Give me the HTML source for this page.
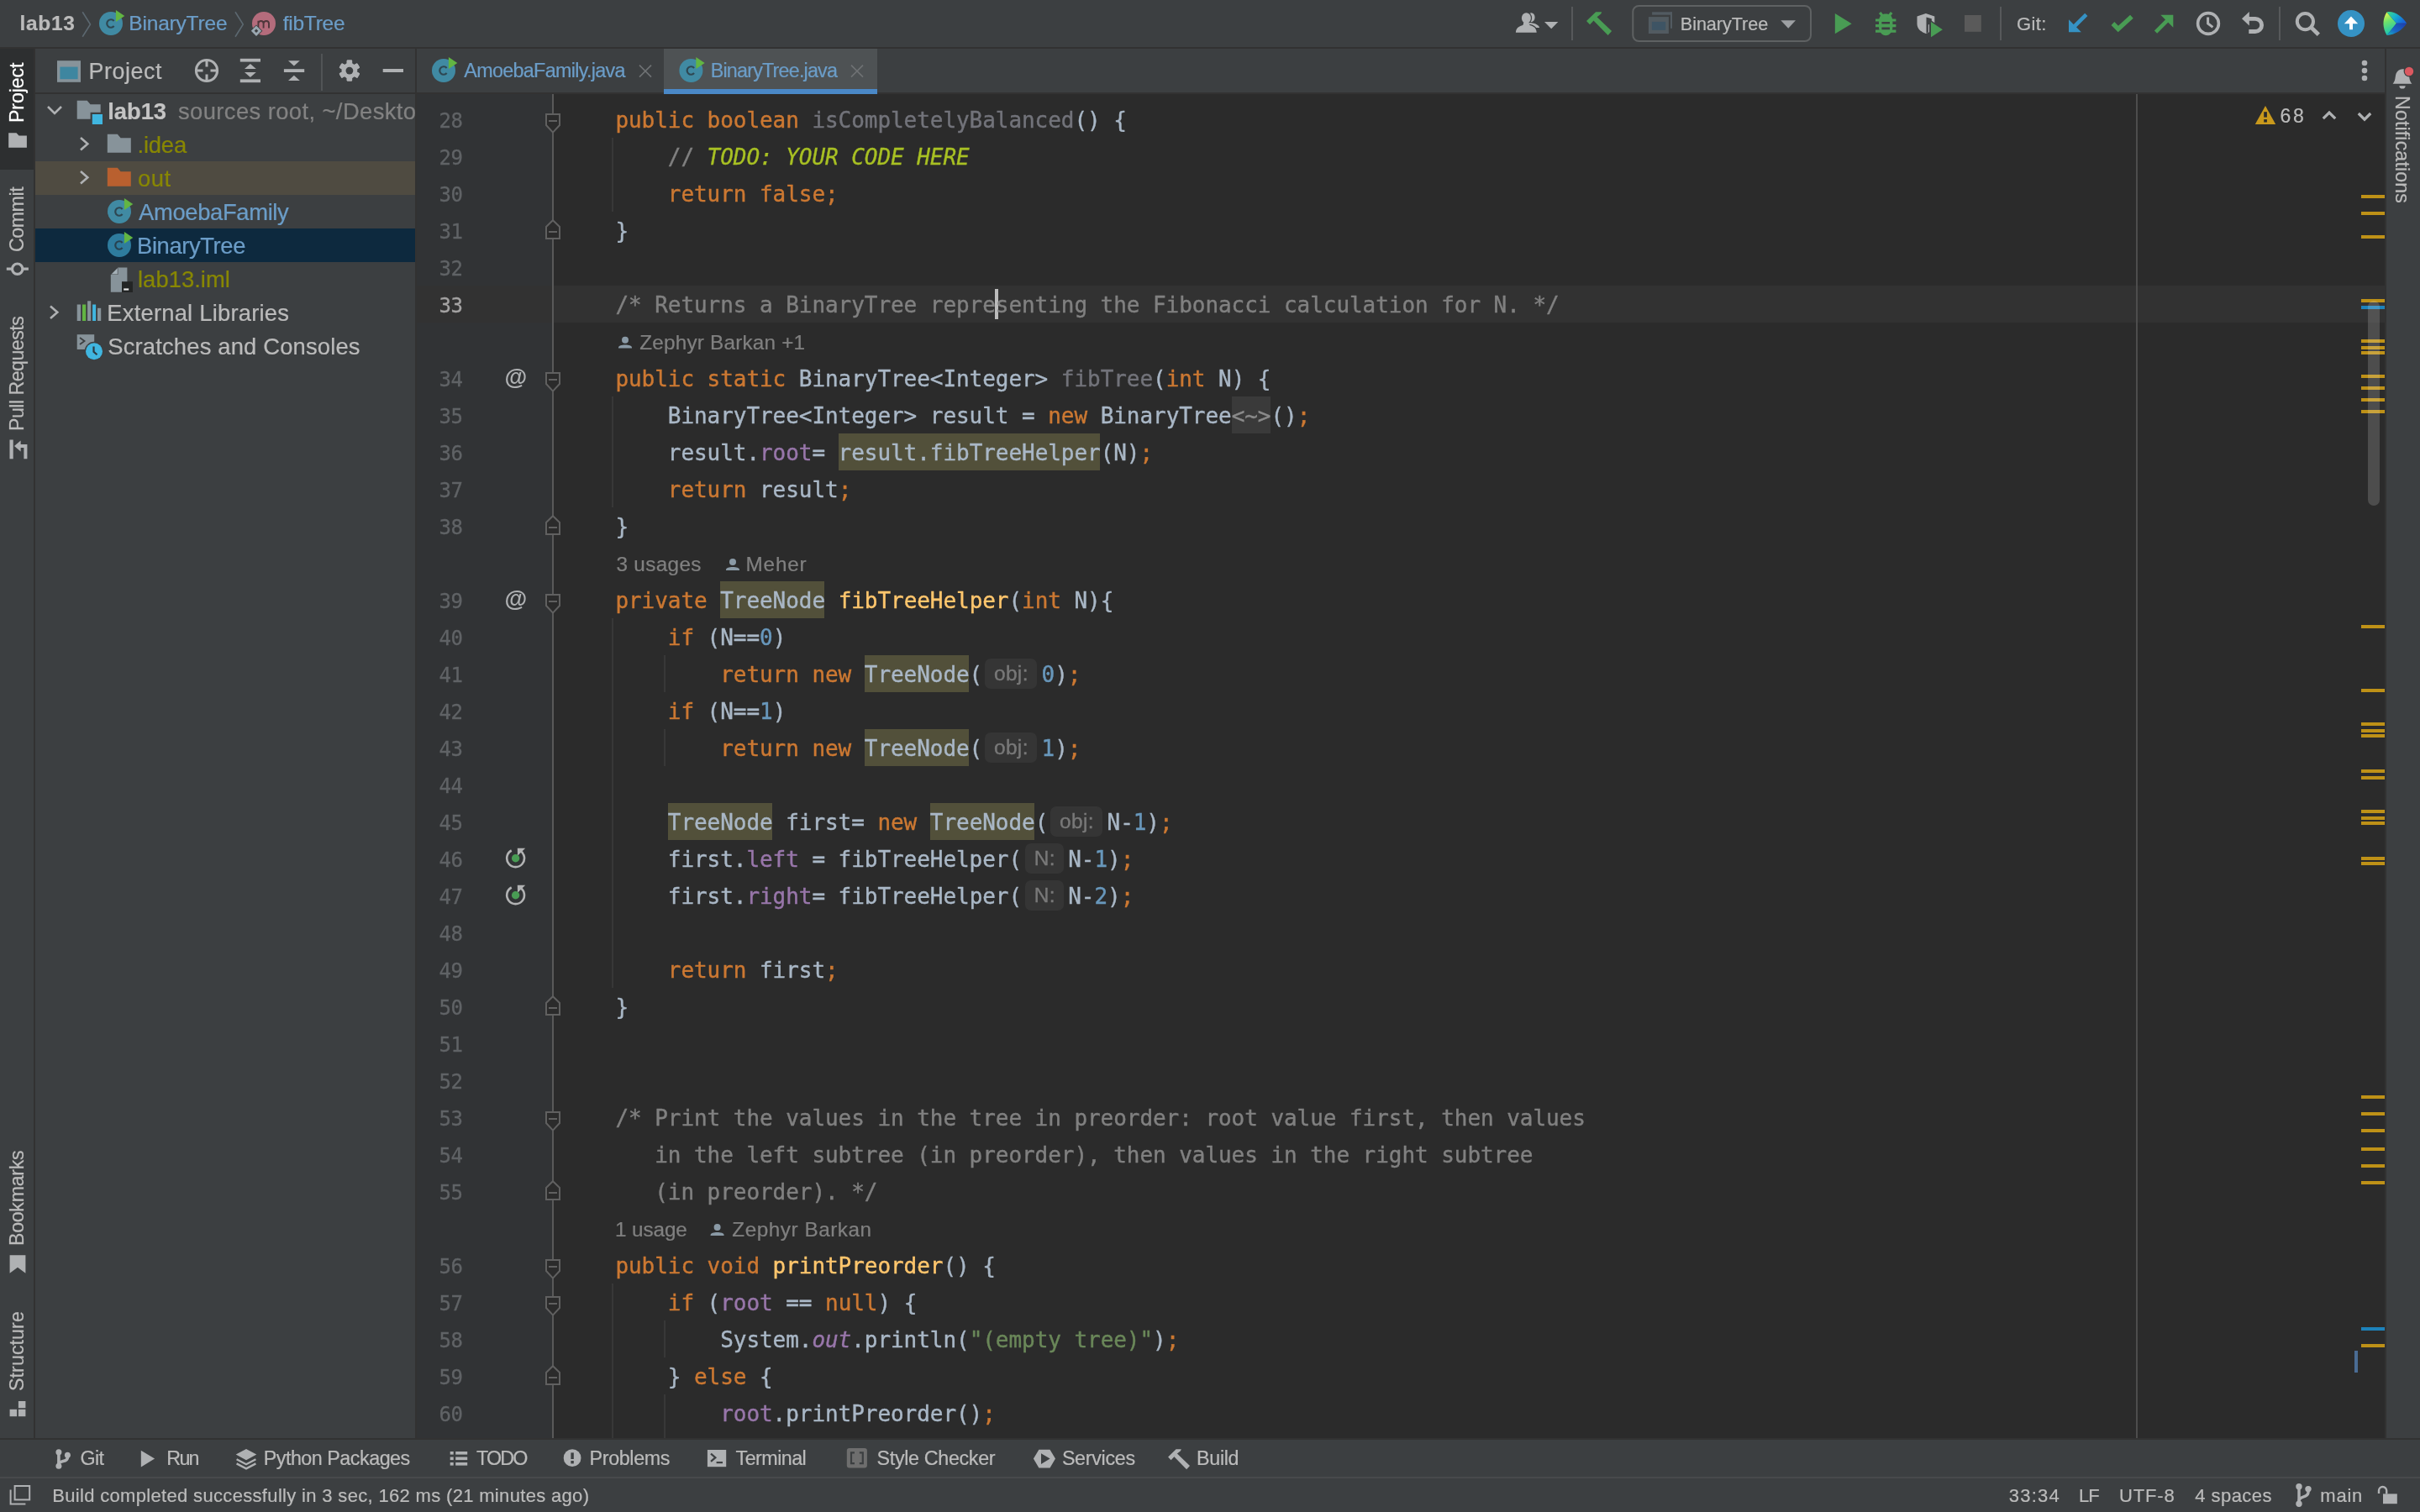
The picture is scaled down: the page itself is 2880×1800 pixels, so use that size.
<!DOCTYPE html><html><head><meta charset="utf-8"><title>lab13 - BinaryTree.java</title><style>
html,body{margin:0;padding:0}
body{width:2880px;height:1800px;background:#3c3f41;position:relative;overflow:hidden;font-family:"Liberation Sans", sans-serif;color:#bbb}
.r{position:absolute}
.t{position:absolute;white-space:nowrap;line-height:1em;display:block;-webkit-text-stroke:0.22px}
#ov{position:absolute;left:0;top:0}
#w{position:absolute;left:0;top:0;width:2880px;height:1800px;overflow:hidden;will-change:transform}
.cl{position:absolute;left:670px;height:44px;line-height:44px;white-space:pre;font-family:"DejaVu Sans Mono", "Liberation Mono", monospace;font-size:26px;letter-spacing:-0.053px;color:#a9b7c6;-webkit-text-stroke:0.4px}
.ln{position:absolute;left:496px;width:54.5px;text-align:right;height:44px;line-height:44px;font-family:"DejaVu Sans Mono", "Liberation Mono", monospace;font-size:24px;letter-spacing:-0.4px;color:#606366;-webkit-text-stroke:0.3px}
.k{color:#cc7832}.d{color:#a9b7c6}.c{color:#808080}.t2{}.n{color:#6897bb}.s{color:#6a8759}.f{color:#9876aa}
.fs{color:#9876aa;font-style:italic}.m{color:#ffc66d}.u{color:#72737a}.fo{color:#8a8a8a}
.cl .t{position:static;display:inline;color:#a8c023;font-style:italic;line-height:inherit;-webkit-text-stroke:0.3px}
.ih{display:inline-block;height:36px;vertical-align:top;position:relative;top:3px;letter-spacing:0}
.ihb{display:block;height:36px;line-height:35px;border-radius:7px;background:#353535;color:#787878;font-family:"Liberation Sans", sans-serif;font-size:24.4px;letter-spacing:0.35px;text-align:center}
.at{position:absolute;font-family:"Liberation Sans", sans-serif;font-weight:bold;font-size:27.4px;line-height:1em;color:#afb1b3}

</style></head><body><div id="w">
<div class="r" style="left:0px;top:56px;width:2880px;height:2px;background:#323232;"></div>
<div class="r" style="left:0px;top:58px;width:40px;height:1654px;background:#3c3f41;"></div>
<div class="r" style="left:0px;top:58px;width:40px;height:144px;background:#2d2f30;"></div>
<div class="r" style="left:40px;top:58px;width:2px;height:1654px;background:#323232;"></div>
<div class="r" style="left:42px;top:110px;width:452px;height:2px;background:#323232;"></div>
<div class="r" style="left:494px;top:58px;width:2px;height:1654px;background:#323232;"></div>
<div class="r" style="left:42px;top:192px;width:452px;height:40px;background:#4f4b41;"></div>
<div class="r" style="left:42px;top:272px;width:452px;height:40px;background:#0d293e;"></div>
<div class="r" style="left:496px;top:110px;width:2344px;height:2px;background:#323232;"></div>
<div class="r" style="left:790px;top:58px;width:254.3px;height:48px;background:#4e5254;"></div>
<div class="r" style="left:790px;top:106px;width:254.3px;height:6px;background:#4a88c7;"></div>
<div class="r" style="left:496px;top:112px;width:2344px;height:1600px;background:#2b2b2b;"></div>
<div class="r" style="left:496px;top:112px;width:161px;height:1600px;background:#313335;"></div>
<div class="r" style="left:496px;top:340px;width:2344px;height:44px;background:#323232;"></div>
<div class="r" style="left:657px;top:112px;width:2px;height:1600px;background:#595959;"></div>
<div class="r" style="left:2542px;top:112px;width:2px;height:1600px;background:#4d4d4d;"></div>
<div class="r" style="left:2838px;top:58px;width:2px;height:1654px;background:#323232;"></div>
<div class="r" style="left:2840px;top:58px;width:40px;height:1654px;background:#3c3f41;"></div>
<div class="r" style="left:0px;top:1712px;width:2880px;height:2px;background:#323232;"></div>
<div class="r" style="left:0px;top:1758px;width:2880px;height:2px;background:#484a4c;"></div>
<div class="r" style="left:728px;top:164px;width:2px;height:88px;background:#383838;"></div>
<div class="r" style="left:728px;top:472px;width:2px;height:132px;background:#383838;"></div>
<div class="r" style="left:728px;top:736px;width:2px;height:440px;background:#383838;"></div>
<div class="r" style="left:728px;top:1528px;width:2px;height:184px;background:#383838;"></div>
<div class="r" style="left:790.4px;top:780px;width:2px;height:44px;background:#383838;"></div>
<div class="r" style="left:790.4px;top:868px;width:2px;height:44px;background:#383838;"></div>
<div class="r" style="left:790.4px;top:1572px;width:2px;height:44px;background:#383838;"></div>
<div class="r" style="left:790.4px;top:1660px;width:2px;height:52px;background:#383838;"></div>
<div class="r" style="left:997.6px;top:516px;width:311.2px;height:44px;background:#52503a;"></div>
<div class="r" style="left:857.2px;top:692px;width:124.0px;height:44px;background:#52503a;"></div>
<div class="r" style="left:1028.8px;top:780px;width:124.0px;height:44px;background:#52503a;"></div>
<div class="r" style="left:1028.8px;top:868px;width:124.0px;height:44px;background:#52503a;"></div>
<div class="r" style="left:794.8px;top:956px;width:124.0px;height:44px;background:#52503a;"></div>
<div class="r" style="left:1106.8px;top:956px;width:124.0px;height:44px;background:#52503a;"></div>
<div class="r" style="left:1465.6px;top:472px;width:46.0px;height:44px;background:#3a3a3a;"></div>
<div class="r" style="left:1184px;top:344px;width:4px;height:36px;background:#bbbbbb;"></div>
<div class="r" style="left:2810px;top:232px;width:28px;height:4px;background:#be9117;"></div>
<div class="r" style="left:2810px;top:252px;width:28px;height:4px;background:#be9117;"></div>
<div class="r" style="left:2810px;top:280px;width:28px;height:4px;background:#be9117;"></div>
<div class="r" style="left:2810px;top:356px;width:28px;height:4px;background:#be9117;"></div>
<div class="r" style="left:2810px;top:404px;width:28px;height:4px;background:#be9117;"></div>
<div class="r" style="left:2810px;top:412px;width:28px;height:4px;background:#be9117;"></div>
<div class="r" style="left:2810px;top:418px;width:28px;height:4px;background:#be9117;"></div>
<div class="r" style="left:2810px;top:446px;width:28px;height:4px;background:#be9117;"></div>
<div class="r" style="left:2810px;top:460px;width:28px;height:4px;background:#be9117;"></div>
<div class="r" style="left:2810px;top:474px;width:28px;height:4px;background:#be9117;"></div>
<div class="r" style="left:2810px;top:488px;width:28px;height:4px;background:#be9117;"></div>
<div class="r" style="left:2810px;top:744px;width:28px;height:4px;background:#be9117;"></div>
<div class="r" style="left:2810px;top:820px;width:28px;height:4px;background:#be9117;"></div>
<div class="r" style="left:2810px;top:860px;width:28px;height:4px;background:#be9117;"></div>
<div class="r" style="left:2810px;top:868px;width:28px;height:4px;background:#be9117;"></div>
<div class="r" style="left:2810px;top:874px;width:28px;height:4px;background:#be9117;"></div>
<div class="r" style="left:2810px;top:916px;width:28px;height:4px;background:#be9117;"></div>
<div class="r" style="left:2810px;top:924px;width:28px;height:4px;background:#be9117;"></div>
<div class="r" style="left:2810px;top:964px;width:28px;height:4px;background:#be9117;"></div>
<div class="r" style="left:2810px;top:972px;width:28px;height:4px;background:#be9117;"></div>
<div class="r" style="left:2810px;top:978px;width:28px;height:4px;background:#be9117;"></div>
<div class="r" style="left:2810px;top:1020px;width:28px;height:4px;background:#be9117;"></div>
<div class="r" style="left:2810px;top:1026px;width:28px;height:4px;background:#be9117;"></div>
<div class="r" style="left:2810px;top:1304px;width:28px;height:4px;background:#be9117;"></div>
<div class="r" style="left:2810px;top:1324px;width:28px;height:4px;background:#be9117;"></div>
<div class="r" style="left:2810px;top:1344px;width:28px;height:4px;background:#be9117;"></div>
<div class="r" style="left:2810px;top:1366px;width:28px;height:4px;background:#be9117;"></div>
<div class="r" style="left:2810px;top:1386px;width:28px;height:4px;background:#be9117;"></div>
<div class="r" style="left:2810px;top:1406px;width:28px;height:4px;background:#be9117;"></div>
<div class="r" style="left:2810px;top:1600px;width:28px;height:4px;background:#be9117;"></div>
<div class="r" style="left:2810px;top:364px;width:28px;height:4px;background:#1d82bb;"></div>
<div class="r" style="left:2810px;top:1580px;width:28px;height:4px;background:#1d82bb;"></div>
<div class="r" style="left:2802px;top:1608px;width:4px;height:26px;background:#4a6c94;"></div>
<div class="r" style="left:2818px;top:358px;width:14px;height:244px;background:rgba(255,255,255,0.16);border-radius:7px"></div>
<div class="ln" style="top:121.8px">28</div>
<div class="cl" style="top:121px"><span class="k">    public boolean </span><span class="u">isCompletelyBalanced</span><span class="d">() {</span></div>
<div class="ln" style="top:165.8px">29</div>
<div class="cl" style="top:165px"><span class="c">        // </span><span class="t">TODO: YOUR CODE HERE</span></div>
<div class="ln" style="top:209.8px">30</div>
<div class="cl" style="top:209px"><span class="k">        return false;</span></div>
<div class="ln" style="top:253.8px">31</div>
<div class="cl" style="top:253px"><span class="d">    }</span></div>
<div class="ln" style="top:297.8px">32</div>
<div class="ln" style="top:341.8px;color:#a4a3a3">33</div>
<div class="cl" style="top:341px"><span class="c">    /* Returns a BinaryTree representing the Fibonacci calculation for N. */</span></div>
<div class="ln" style="top:429.8px">34</div>
<div class="cl" style="top:429px"><span class="k">    public static </span><span class="d">BinaryTree&lt;Integer&gt; </span><span class="u">fibTree</span><span class="d">(</span><span class="k">int </span><span class="d">N) {</span></div>
<div class="ln" style="top:473.8px">35</div>
<div class="cl" style="top:473px"><span class="d">        BinaryTree&lt;Integer&gt; result = </span><span class="k">new </span><span class="d">BinaryTree</span><span class="fo">&lt;~&gt;</span><span class="d">()</span><span class="k">;</span></div>
<div class="ln" style="top:517.8px">36</div>
<div class="cl" style="top:517px"><span class="d">        result.</span><span class="f">root</span><span class="d">= result.fibTreeHelper(N)</span><span class="k">;</span></div>
<div class="ln" style="top:561.8px">37</div>
<div class="cl" style="top:561px"><span class="k">        return </span><span class="d">result</span><span class="k">;</span></div>
<div class="ln" style="top:605.8px">38</div>
<div class="cl" style="top:605px"><span class="d">    }</span></div>
<div class="ln" style="top:693.8px">39</div>
<div class="cl" style="top:693px"><span class="k">    private </span><span class="d">TreeNode </span><span class="m">fibTreeHelper</span><span class="d">(</span><span class="k">int </span><span class="d">N){</span></div>
<div class="ln" style="top:737.8px">40</div>
<div class="cl" style="top:737px"><span class="k">        if </span><span class="d">(N==</span><span class="n">0</span><span class="d">)</span></div>
<div class="ln" style="top:781.8px">41</div>
<div class="cl" style="top:781px"><span class="k">            return new </span><span class="d">TreeNode(</span><span class="ih" style="width:70.3px"><span class="ihb" style="width:62px;margin-left:3.2px">obj:</span></span><span class="n">0</span><span class="d">)</span><span class="k">;</span></div>
<div class="ln" style="top:825.8px">42</div>
<div class="cl" style="top:825px"><span class="k">        if </span><span class="d">(N==</span><span class="n">1</span><span class="d">)</span></div>
<div class="ln" style="top:869.8px">43</div>
<div class="cl" style="top:869px"><span class="k">            return new </span><span class="d">TreeNode(</span><span class="ih" style="width:70.3px"><span class="ihb" style="width:62px;margin-left:3.2px">obj:</span></span><span class="n">1</span><span class="d">)</span><span class="k">;</span></div>
<div class="ln" style="top:913.8px">44</div>
<div class="ln" style="top:957.8px">45</div>
<div class="cl" style="top:957px"><span class="d">        TreeNode first= </span><span class="k">new </span><span class="d">TreeNode(</span><span class="ih" style="width:70.3px"><span class="ihb" style="width:62px;margin-left:3.2px">obj:</span></span><span class="d">N-</span><span class="n">1</span><span class="d">)</span><span class="k">;</span></div>
<div class="ln" style="top:1001.8px">46</div>
<div class="cl" style="top:1001px"><span class="d">        first.</span><span class="f">left</span><span class="d"> = fibTreeHelper(</span><span class="ih" style="width:55.2px"><span class="ihb" style="width:46px;margin-left:4.2px">N:</span></span><span class="d">N-</span><span class="n">1</span><span class="d">)</span><span class="k">;</span></div>
<div class="ln" style="top:1045.8px">47</div>
<div class="cl" style="top:1045px"><span class="d">        first.</span><span class="f">right</span><span class="d">= fibTreeHelper(</span><span class="ih" style="width:55.2px"><span class="ihb" style="width:46px;margin-left:4.2px">N:</span></span><span class="d">N-</span><span class="n">2</span><span class="d">)</span><span class="k">;</span></div>
<div class="ln" style="top:1089.8px">48</div>
<div class="ln" style="top:1133.8px">49</div>
<div class="cl" style="top:1133px"><span class="k">        return </span><span class="d">first</span><span class="k">;</span></div>
<div class="ln" style="top:1177.8px">50</div>
<div class="cl" style="top:1177px"><span class="d">    }</span></div>
<div class="ln" style="top:1221.8px">51</div>
<div class="ln" style="top:1265.8px">52</div>
<div class="ln" style="top:1309.8px">53</div>
<div class="cl" style="top:1309px"><span class="c">    /* Print the values in the tree in preorder: root value first, then values</span></div>
<div class="ln" style="top:1353.8px">54</div>
<div class="cl" style="top:1353px"><span class="c">       in the left subtree (in preorder), then values in the right subtree</span></div>
<div class="ln" style="top:1397.8px">55</div>
<div class="cl" style="top:1397px"><span class="c">       (in preorder). */</span></div>
<div class="ln" style="top:1485.8px">56</div>
<div class="cl" style="top:1485px"><span class="k">    public void </span><span class="m">printPreorder</span><span class="d">() {</span></div>
<div class="ln" style="top:1529.8px">57</div>
<div class="cl" style="top:1529px"><span class="k">        if </span><span class="d">(</span><span class="f">root</span><span class="d"> == </span><span class="k">null</span><span class="d">) {</span></div>
<div class="ln" style="top:1573.8px">58</div>
<div class="cl" style="top:1573px"><span class="d">            System.</span><span class="fs">out</span><span class="d">.println(</span><span class="s">"(empty tree)"</span><span class="d">)</span><span class="k">;</span></div>
<div class="ln" style="top:1617.8px">59</div>
<div class="cl" style="top:1617px"><span class="d">        } </span><span class="k">else </span><span class="d">{</span></div>
<div class="ln" style="top:1661.8px">60</div>
<div class="cl" style="top:1661px"><span class="f">            root</span><span class="d">.printPreorder()</span><span class="k">;</span></div>
<span class="at" style="left:600.5px;top:434.5px">@</span><span class="at" style="left:600.5px;top:698.5px">@</span>
<div class="r" style="left:658px;top:112px;width:800px;height:16px;overflow:hidden"><span class="t" style="left:102.2px;top:-24.6px;font-size:24.3px;letter-spacing:0.2px;color:#808080">Zephyr Barkan</span></div>
<span class="t" style="font-size:24.5px;letter-spacing:0.644px;color:#bbbbbb;font-weight:bold;left:23.60px;top:16px;">lab13</span>
<span class="t" style="font-size:24.5px;letter-spacing:-0.187px;color:#6b9dc8;left:153.30px;top:16px;">BinaryTree</span>
<span class="t" style="font-size:24.5px;letter-spacing:-0.236px;color:#6b9dc8;left:336.70px;top:16px;">fibTree</span>
<span class="t" style="font-size:21.6px;letter-spacing:-0.044px;color:#bbbbbb;left:1999.80px;top:18px;">BinaryTree</span>
<span class="t" style="font-size:22px;letter-spacing:0.396px;color:#bbbbbb;left:2399.90px;top:18px;">Git:</span>
<span class="t" style="font-size:23.3px;letter-spacing:-0.662px;color:#6b9dc8;left:552.30px;top:73px;">AmoebaFamily.java</span>
<span class="t" style="font-size:23.3px;letter-spacing:-0.788px;color:#6b9dc8;left:845.70px;top:73px;">BinaryTree.java</span>
<span class="t" style="font-size:26.8px;letter-spacing:0.591px;color:#bbbbbb;left:105.50px;top:72px;">Project</span>
<span class="t" style="font-size:27.4px;letter-spacing:-0.077px;color:#c4c4c4;font-weight:bold;left:128.30px;top:119px;">lab13</span>
<span class="t" style="font-size:27.4px;letter-spacing:0.396px;color:#828282;left:212.00px;top:119px;width:282px;overflow:hidden;">sources root, ~/Desktop</span>
<span class="t" style="font-size:27.4px;letter-spacing:-0.191px;color:#888703;left:163.50px;top:159px;">.idea</span>
<span class="t" style="font-size:27.4px;letter-spacing:0.517px;color:#888703;left:164.00px;top:199px;">out</span>
<span class="t" style="font-size:27.4px;letter-spacing:-0.352px;color:#6b9dc8;left:165.00px;top:239px;">AmoebaFamily</span>
<span class="t" style="font-size:27.4px;letter-spacing:-0.390px;color:#6b9dc8;left:163.00px;top:279px;">BinaryTree</span>
<span class="t" style="font-size:27.4px;letter-spacing:0.034px;color:#888703;left:164.00px;top:319px;">lab13.iml</span>
<span class="t" style="font-size:27.4px;letter-spacing:0.204px;color:#bbbbbb;left:127.30px;top:359px;">External Libraries</span>
<span class="t" style="font-size:27.4px;letter-spacing:0.157px;color:#bbbbbb;left:128.30px;top:399px;">Scratches and Consoles</span>
<span class="t" style="font-size:23.2px;letter-spacing:-0.137px;color:#ffffff;left:9.40px;top:145.50px;transform-origin:0 0;transform:rotate(-90deg);">Project</span>
<span class="t" style="font-size:23.2px;letter-spacing:-0.445px;color:#bbbbbb;left:9.10px;top:299.60px;transform-origin:0 0;transform:rotate(-90deg);">Commit</span>
<span class="t" style="font-size:23.2px;letter-spacing:-0.523px;color:#bbbbbb;left:9.10px;top:513.40px;transform-origin:0 0;transform:rotate(-90deg);">Pull Requests</span>
<span class="t" style="font-size:23.2px;letter-spacing:-0.297px;color:#bbbbbb;left:9.10px;top:1483.40px;transform-origin:0 0;transform:rotate(-90deg);">Bookmarks</span>
<span class="t" style="font-size:23.2px;letter-spacing:0.090px;color:#bbbbbb;left:9.10px;top:1655.90px;transform-origin:0 0;transform:rotate(-90deg);">Structure</span>
<span class="t" style="font-size:23.2px;letter-spacing:0.133px;color:#bbbbbb;left:2870.30px;top:113.90px;transform-origin:0 0;transform:rotate(90deg);">Notifications</span>
<span class="t" style="font-size:23px;letter-spacing:2.508px;color:#bbbbbb;left:2713.60px;top:127px;">68</span>
<span class="t" style="font-size:24.3px;letter-spacing:0.207px;color:#808080;left:761.20px;top:396px;">Zephyr Barkan +1</span>
<span class="t" style="font-size:24.3px;letter-spacing:0.348px;color:#808080;left:733.40px;top:660px;">3 usages</span>
<span class="t" style="font-size:24.3px;letter-spacing:0.781px;color:#808080;left:887.60px;top:660px;">Meher</span>
<span class="t" style="font-size:24.3px;letter-spacing:-0.108px;color:#808080;left:732.00px;top:1452px;">1 usage</span>
<span class="t" style="font-size:24.3px;letter-spacing:0.538px;color:#808080;left:871.30px;top:1452px;">Zephyr Barkan</span>
<span class="t" style="font-size:23.3px;letter-spacing:-0.598px;color:#bbbbbb;left:95.40px;top:1725px;">Git</span>
<span class="t" style="font-size:23.3px;letter-spacing:-1.740px;color:#bbbbbb;left:198.30px;top:1725px;">Run</span>
<span class="t" style="font-size:23.3px;letter-spacing:-0.483px;color:#bbbbbb;left:313.70px;top:1725px;">Python Packages</span>
<span class="t" style="font-size:23.3px;letter-spacing:-1.852px;color:#bbbbbb;left:567.00px;top:1725px;">TODO</span>
<span class="t" style="font-size:23.3px;letter-spacing:-0.364px;color:#bbbbbb;left:701.60px;top:1725px;">Problems</span>
<span class="t" style="font-size:23.3px;letter-spacing:-0.551px;color:#bbbbbb;left:875.60px;top:1725px;">Terminal</span>
<span class="t" style="font-size:23.3px;letter-spacing:-0.338px;color:#bbbbbb;left:1043.60px;top:1725px;">Style Checker</span>
<span class="t" style="font-size:23.3px;letter-spacing:-0.312px;color:#bbbbbb;left:1263.90px;top:1725px;">Services</span>
<span class="t" style="font-size:23.3px;letter-spacing:-0.337px;color:#bbbbbb;left:1424.10px;top:1725px;">Build</span>
<span class="t" style="font-size:22px;letter-spacing:0.329px;color:#bbbbbb;left:62.20px;top:1770px;">Build completed successfully in 3 sec, 162 ms (21 minutes ago)</span>
<span class="t" style="font-size:22px;letter-spacing:1.245px;color:#bbbbbb;left:2390.80px;top:1770px;">33:34</span>
<span class="t" style="font-size:22px;letter-spacing:-1.135px;color:#bbbbbb;left:2474.10px;top:1770px;">LF</span>
<span class="t" style="font-size:22px;letter-spacing:0.852px;color:#bbbbbb;left:2522.00px;top:1770px;">UTF-8</span>
<span class="t" style="font-size:22px;letter-spacing:0.449px;color:#bbbbbb;left:2612.30px;top:1770px;">4 spaces</span>
<span class="t" style="font-size:22px;letter-spacing:0.784px;color:#bbbbbb;left:2761.30px;top:1770px;">main</span>
<svg id="ov" width="2880" height="1800" viewBox="0 0 2880 1800"><polyline points="98.2,14.2 107.5,29 98.2,43.7" fill="none" stroke="#5c6870" stroke-width="1.6"/><polyline points="280,14.2 289.3,29 280,43.7" fill="none" stroke="#5c6870" stroke-width="1.6"/><circle cx="132" cy="28" r="14" fill="#408aa3"/><path d="M135.64,24.95 A4.75,4.75 0 1 0 135.64,31.05" fill="none" stroke="#231f20" stroke-opacity="0.62" stroke-width="2.2"/><polygon points="137.9,12 148.3,19.1 137.9,25.9" fill="#62b543"/><circle cx="314" cy="28" r="14" fill="#b46c7c"/><path d="M307.4,33.4 v-8.6 M307.4,27.6 c0.6,-3.2 5.8,-3.8 6.2,0.2 v5.6 M313.6,27.8 c0.6,-3.4 6,-4 6.4,0 v5.6" fill="none" stroke="#231f20" stroke-opacity="0.7" stroke-width="1.9"/><polygon points="305,29.4 312.4,36.8 305,44.2 297.6,36.8" fill="#3c3f41"/><polygon points="305,30.6 311.2,36.8 305,43 298.8,36.8" fill="#9aa7b0"/><rect x="303.4" y="35.2" width="3.2" height="3.2" fill="#3c3f41" transform="rotate(45 305 36.8)"/><ellipse cx="1822.3" cy="20.7" rx="4.3" ry="5.5" fill="#afb1b3"/><path d="M1818,33 V27 C1824.5,27 1831,28.6 1832.2,33 Z" fill="#afb1b3"/><ellipse cx="1816.4" cy="21.5" rx="6.7" ry="7.5" fill="#3c3f41"/><path d="M1802.7,40 C1803,32.4 1806,30.6 1811.5,29 H1821.3 C1826.8,30.6 1829.6,32.4 1829.9,40 Z" fill="#3c3f41"/><ellipse cx="1816.4" cy="21.5" rx="5.5" ry="6.3" fill="#afb1b3"/><path d="M1803.9,38.8 C1804.2,33.5 1807,31.6 1811.5,30.2 C1813,29.7 1813.2,28.5 1813,27 H1819.8 C1819.6,28.5 1819.8,29.7 1821.3,30.2 C1825.8,31.6 1828.4,33.5 1828.7,38.8 Z" fill="#afb1b3"/><polygon points="1838,26 1854.3,26 1846.2,34.2" fill="#afb1b3"/><rect x="1870" y="8" width="2" height="40" fill="#57595b"/><path d="M1888.0,25.1 L1899.1,14.3 L1906.2,14.3 L1905.3,16.4 L1900.6,20.3 L1892.1,29.2 Z" fill="#499c54"/><path d="M1900.0,19.7 L1918.1,37.1 L1913.6,42.0 L1896.2,24.3 Z" fill="#499c54"/><rect x="1943.3" y="7" width="211.7" height="42" rx="7" fill="none" stroke="#5e6162" stroke-width="2"/><rect x="1966.1" y="14.3" width="23.9" height="3.4" fill="#525b61"/><rect x="1988" y="14.3" width="2" height="19.5" fill="#525b61"/><rect x="1961.9" y="20.1" width="24" height="19.9" fill="#525b61"/><rect x="1965.9" y="25.9" width="16.3" height="9.9" fill="#3e5464"/><polygon points="2119.3,24.3 2137,24.3 2128.2,33.8" fill="#9da0a3"/><polygon points="2183.8,16 2203.7,28.2 2183.8,40.3" fill="#499c54"/><g fill="#499c54" stroke="#499c54"><path d="M2236,26 c0,-7 3.6,-9.4 8.2,-9.4 s8.2,2.4 8.2,9.4 v6 c0,6 -3.6,10.2 -8.2,10.2 s-8.2,-4.2 -8.2,-10.2 z" stroke="none"/><path d="M2232,24 h24.4 M2232,30.6 h24.4 M2232,37.2 h24.4" stroke-width="3.2"/><path d="M2240.8,19.6 l-3.6,-4.6 M2247.6,19.6 l3.6,-4.6" stroke-width="3.2"/></g><path d="M2239.4,27.3 h9.6 M2239.4,33.9 h9.6" stroke="#3c3f41" stroke-width="2.6"/><path d="M2281.5,19.5 l10.4,-3.5 10.4,3.5 v9 c0,6 -5,9.5 -10.4,11.5 c-5.4,-2 -10.4,-5.5 -10.4,-11.5 z" fill="#afb1b3"/><path d="M2292.5,20.5 l6.3,1.8 v5.2 l-4,2 v9 c-1,0.6 -1.6,0.8 -2.3,1 z" fill="#3c3f41"/><polygon points="2296,23 2315,35.2 2296,47.5" fill="#3c3f41"/><polygon points="2298,26 2311.9,35.2 2298,44.3" fill="#499c54"/><rect x="2338" y="18" width="19.8" height="19.8" fill="#5a5a5a"/><rect x="2380" y="8" width="2" height="40" fill="#57595b"/><path d="M2482.8,17.4 L2467,33.2" stroke="#3592c4" stroke-width="4.6"/><polygon points="2462,23.3 2462,38.2 2476.9,38.2" fill="#3592c4"/><polyline points="2514.4,28 2520.8,34.4 2536.9,19.8" fill="none" stroke="#499c54" stroke-width="5.4"/><path d="M2565.5,38.2 L2581.5,22.2" stroke="#499c54" stroke-width="4.6"/><polygon points="2571.3,17.8 2586.3,17.8 2586.3,32.8" fill="#499c54"/><circle cx="2628" cy="28" r="12.4" fill="none" stroke="#afb1b3" stroke-width="3.6"/><path d="M2627.6,20.5 V28 L2633.4,32.4" fill="none" stroke="#afb1b3" stroke-width="3"/><polygon points="2668,22.3 2676.8,14 2676.8,30.6" fill="#afb1b3"/><path d="M2676,22.3 H2684 A7.6,7.6 0 0 1 2684,37.5 H2676.3" fill="none" stroke="#afb1b3" stroke-width="4.8"/><rect x="2712" y="8" width="2" height="40" fill="#57595b"/><circle cx="2743.4" cy="25.6" r="9.6" fill="none" stroke="#afb1b3" stroke-width="4"/><path d="M2750.5,32.6 L2759.3,41.3" stroke="#afb1b3" stroke-width="4.8"/><circle cx="2798" cy="28" r="16" fill="#3592c4"/><path d="M2798,35.2 V24" stroke="#fff" stroke-width="4"/><polygon points="2789.8,28.2 2798,19.6 2806.2,28.2" fill="#fff"/><defs><linearGradient id="lg1" x1="0" y1="0" x2="0.25" y2="1"><stop offset="0" stop-color="#fdf84a"/><stop offset="0.45" stop-color="#6fe16a"/><stop offset="1" stop-color="#19c3b4"/></linearGradient><linearGradient id="lg2" x1="0" y1="0" x2="1" y2="0.5"><stop offset="0" stop-color="#47dd7a"/><stop offset="0.5" stop-color="#17b0cf"/><stop offset="1" stop-color="#1666dc"/></linearGradient><linearGradient id="lg3" x1="1" y1="0" x2="0" y2="1"><stop offset="0" stop-color="#1d3cac"/><stop offset="0.6" stop-color="#1a66c4"/><stop offset="1" stop-color="#18b6c4"/></linearGradient></defs><path d="M2840.4,14.4 c-5.4,8.6 -5.2,18.6 0.2,27.6 l11.4,-14.2 z" fill="url(#lg1)"/><path d="M2840.4,14.4 c8.4,-1.8 18,4.8 23.8,13.4 h-12.2 z" fill="url(#lg2)"/><path d="M2864.2,27.8 c-5.2,8.2 -14,13.6 -23.6,14.2 l11.4,-14.2 z" fill="url(#lg3)"/><rect x="68" y="72.2" width="28" height="25.6" fill="#87939a"/><rect x="71.4" y="79.6" width="21.2" height="14.6" fill="#3e86a0"/><circle cx="246" cy="84" r="12.6" fill="none" stroke="#afb1b3" stroke-width="3"/><path d="M246,71 v8.5 M246,88.5 v8.5 M233,84 h8.5 M250.5,84 h8.5" stroke="#afb1b3" stroke-width="3"/><rect x="285.8" y="69.8" width="24.2" height="3.8" fill="#afb1b3"/><rect x="285.8" y="94.4" width="24.2" height="3.8" fill="#afb1b3"/><polygon points="291,82 297.9,76 304.8,82" fill="#afb1b3"/><polygon points="291,86 297.9,92 304.8,86" fill="#afb1b3"/><rect x="337.9" y="82.2" width="24.3" height="3.8" fill="#afb1b3"/><polygon points="343,72.3 356.8,72.3 349.9,78.6" fill="#afb1b3"/><polygon points="343,96 356.8,96 349.9,89.7" fill="#afb1b3"/><rect x="382" y="64" width="2" height="44" fill="#515456"/><rect x="412.7" y="71.6" width="6.4" height="25" rx="1" fill="#afb1b3" transform="rotate(0 415.9 84.1)"/><rect x="412.7" y="71.6" width="6.4" height="25" rx="1" fill="#afb1b3" transform="rotate(60 415.9 84.1)"/><rect x="412.7" y="71.6" width="6.4" height="25" rx="1" fill="#afb1b3" transform="rotate(120 415.9 84.1)"/><rect x="412.7" y="71.6" width="6.4" height="25" rx="1" fill="#afb1b3" transform="rotate(180 415.9 84.1)"/><rect x="412.7" y="71.6" width="6.4" height="25" rx="1" fill="#afb1b3" transform="rotate(240 415.9 84.1)"/><rect x="412.7" y="71.6" width="6.4" height="25" rx="1" fill="#afb1b3" transform="rotate(300 415.9 84.1)"/><circle cx="415.9" cy="84.1" r="9.4" fill="#afb1b3"/><circle cx="415.9" cy="84.1" r="4.4" fill="#3c3f41"/><rect x="455.7" y="82" width="24.3" height="4" fill="#afb1b3"/><polyline points="57,127 65,135 73,127" fill="none" stroke="#afb1b3" stroke-width="2.6"/><mask id="mf" maskUnits="userSpaceOnUse" x="90" y="118" width="36" height="32"><rect x="90" y="118" width="36" height="32" fill="#fff"/><rect x="107.6" y="133.8" width="20" height="20" fill="#000"/></mask><g mask="url(#mf)"><path d="M91.7,119.8 h12 l3.8,4.4 h12.2 v17.6 h-28 z" fill="#87939a"/></g><rect x="109.8" y="136" width="12.2" height="12" fill="#40b6e0"/><polyline points="96,164 104.3,171.3 96,178.6" fill="none" stroke="#afb1b3" stroke-width="2.6"/><path d="M127.8,159.8 h12 l3.8,4.4 h12.2 v17.6 h-28 z" fill="#87939a"/><polyline points="96,204 104.3,211.3 96,218.6" fill="none" stroke="#afb1b3" stroke-width="2.6"/><path d="M127.8,199.8 h12 l3.8,4.4 h12.2 v17.6 h-28 z" fill="#b9602f"/><circle cx="142" cy="252" r="14" fill="#408aa3"/><path d="M145.64,248.95 A4.75,4.75 0 1 0 145.64,255.05" fill="none" stroke="#231f20" stroke-opacity="0.62" stroke-width="2.2"/><polygon points="147.9,236 158.3,243.1 147.9,249.9" fill="#62b543"/><circle cx="142" cy="292" r="14" fill="#2e7c9e"/><path d="M145.64,288.95 A4.75,4.75 0 1 0 145.64,295.05" fill="none" stroke="#231f20" stroke-opacity="0.62" stroke-width="2.2"/><polygon points="147.9,276 158.3,283.1 147.9,289.9" fill="#62b543"/><path d="M131.8,327 l8.6,-8.6 h11 v29.4 h-19.6 z" fill="#87939a"/><path d="M131.8,327 l8.6,-8.6 v8.6 z" fill="#3c3f41"/><polygon points="132.6,326.4 139.8,319.2 139.8,326.4" fill="#a4b0b7"/><rect x="145" y="335.2" width="13" height="12.8" fill="#232525"/><rect x="147.2" y="343.4" width="6" height="2.2" fill="#e8e8e8"/><polyline points="60,364.5 68.3,371.8 60,379.1" fill="none" stroke="#afb1b3" stroke-width="2.6"/><rect x="91.7" y="362.5" width="4.4" height="19.5" fill="#87939a"/><rect x="98" y="362.5" width="4.2" height="19.5" fill="#62b543"/><rect x="104.1" y="358.3" width="4.1" height="23.7" fill="#87939a"/><rect x="110.1" y="362.5" width="4.0" height="19.5" fill="#40b6e0"/><rect x="116" y="366.8" width="4.2" height="15.2" fill="#87939a"/><rect x="91.7" y="398.2" width="20.5" height="17.8" fill="#87939a"/><polyline points="95,402 100.5,406 95,410" fill="none" stroke="#3c3f41" stroke-width="1.8"/><circle cx="112" cy="418.2" r="11.4" fill="#3c3f41"/><circle cx="112" cy="418.2" r="10" fill="#40b6e0"/><path d="M111.5,412.5 v6.2 l4,3.6" fill="none" stroke="#2b3a42" stroke-width="2.2"/><circle cx="528" cy="84" r="14" fill="#408aa3"/><path d="M531.64,80.95 A4.75,4.75 0 1 0 531.64,87.05" fill="none" stroke="#231f20" stroke-opacity="0.62" stroke-width="2.2"/><polygon points="533.9,68 544.3,75.1 533.9,81.9" fill="#62b543"/><circle cx="822.4" cy="84" r="14" fill="#408aa3"/><path d="M826.04,80.95 A4.75,4.75 0 1 0 826.04,87.05" fill="none" stroke="#231f20" stroke-opacity="0.62" stroke-width="2.2"/><polygon points="828.3,68 838.6999999999999,75.1 828.3,81.9" fill="#62b543"/><path d="M761,77.6 l14,14 M775,77.6 l-14,14" stroke="#6f7274" stroke-width="1.7"/><path d="M1013,77.6 l14,14 M1027,77.6 l-14,14" stroke="#6f7274" stroke-width="1.7"/><circle cx="2814" cy="75" r="3.3" fill="#afb1b3"/><circle cx="2814" cy="84.1" r="3.3" fill="#afb1b3"/><circle cx="2814" cy="93" r="3.3" fill="#afb1b3"/><path d="M10.2,158.2 h9.3 l3,3.4 h9.4 v14.2 h-21.7 z" fill="#afb1b3"/><circle cx="20.7" cy="320.2" r="6.2" fill="none" stroke="#afb1b3" stroke-width="3.2"/><path d="M7.8,320.2 h6.6 M27,320.2 h6.9" stroke="#afb1b3" stroke-width="3.2"/><rect x="11.5" y="523.5" width="4.2" height="22.8" fill="#afb1b3"/><polygon points="17,531 24.6,524.6 24.6,537.4" fill="#afb1b3"/><path d="M24,531 H30.4 V546.3" fill="none" stroke="#afb1b3" stroke-width="4"/><path d="M11.6,1494.2 h18.8 v21.6 l-9.4,-7 l-9.4,7 z" fill="#afb1b3"/><rect x="21.9" y="1668" width="8.5" height="8.2" fill="#afb1b3"/><rect x="11.6" y="1677.8" width="8.5" height="8.4" fill="#afb1b3"/><rect x="21.9" y="1677.8" width="8.5" height="8.4" fill="#afb1b3"/><path d="M2847.6,99.8 c3.6,-3.4 2.6,-8.6 4,-12.2 c1.2,-3.2 4,-5.4 7.4,-5.4 s6.2,2.2 7.4,5.4 c1.4,3.6 0.4,8.8 4,12.2 z" fill="#afb1b3"/><path d="M2855.4,102.2 h7.2 a3.6,3.4 0 0 1 -7.2,0 z" fill="#afb1b3"/><circle cx="2867" cy="85" r="6.4" fill="#3c3f41"/><circle cx="2867" cy="85" r="5.2" fill="#db5860"/><polygon points="2696,126 2708.2,148 2683.8,148" fill="#c9991c"/><rect x="2694.2" y="133.2" width="3.7" height="6.4" fill="#2b2b2b"/><rect x="2694.2" y="142.1" width="3.7" height="3.4" fill="#2b2b2b"/><polyline points="2764.8,141.2 2772,134 2779.2,141.2" fill="none" stroke="#afb1b3" stroke-width="3.2"/><polyline points="2806.8,135 2814,142.2 2821.2,135" fill="none" stroke="#afb1b3" stroke-width="3.2"/><polygon points="650,136 666,136 666,149 658,157.6 650,149" fill="#2b2b2b" stroke="#606060" stroke-width="2"/><rect x="653" y="143" width="10" height="2" fill="#606060"/><polygon points="650,444 666,444 666,457 658,465.6 650,457" fill="#2b2b2b" stroke="#606060" stroke-width="2"/><rect x="653" y="451" width="10" height="2" fill="#606060"/><polygon points="650,708 666,708 666,721 658,729.6 650,721" fill="#2b2b2b" stroke="#606060" stroke-width="2"/><rect x="653" y="715" width="10" height="2" fill="#606060"/><polygon points="650,1324 666,1324 666,1337 658,1345.6 650,1337" fill="#2b2b2b" stroke="#606060" stroke-width="2"/><rect x="653" y="1331" width="10" height="2" fill="#606060"/><polygon points="650,1500 666,1500 666,1513 658,1521.6 650,1513" fill="#2b2b2b" stroke="#606060" stroke-width="2"/><rect x="653" y="1507" width="10" height="2" fill="#606060"/><polygon points="650,1544 666,1544 666,1557 658,1565.6 650,1557" fill="#2b2b2b" stroke="#606060" stroke-width="2"/><rect x="653" y="1551" width="10" height="2" fill="#606060"/><polygon points="658,262.2 666,270 666,284 650,284 650,270" fill="#2b2b2b" stroke="#606060" stroke-width="2"/><rect x="653" y="275" width="10" height="2" fill="#606060"/><polygon points="658,614.2 666,622 666,636 650,636 650,622" fill="#2b2b2b" stroke="#606060" stroke-width="2"/><rect x="653" y="627" width="10" height="2" fill="#606060"/><polygon points="658,1186.2 666,1194 666,1208 650,1208 650,1194" fill="#2b2b2b" stroke="#606060" stroke-width="2"/><rect x="653" y="1199" width="10" height="2" fill="#606060"/><polygon points="658,1406.2 666,1414 666,1428 650,1428 650,1414" fill="#2b2b2b" stroke="#606060" stroke-width="2"/><rect x="653" y="1419" width="10" height="2" fill="#606060"/><polygon points="658,1626.2 666,1634 666,1648 650,1648 650,1634" fill="#2b2b2b" stroke="#606060" stroke-width="2"/><rect x="653" y="1639" width="10" height="2" fill="#606060"/><path d="M618.80,1012.69 A10.4,10.4 0 1 1 608.72,1012.52" fill="none" stroke="#b2b3b4" stroke-width="2.6"/><polygon points="615.8000000000001,1009.7 625.2,1009.7 616.0,1018.7" fill="#b2b3b4"/><circle cx="613.6" cy="1021.7" r="4.7" fill="#499c54"/><path d="M618.80,1056.69 A10.4,10.4 0 1 1 608.72,1056.52" fill="none" stroke="#b2b3b4" stroke-width="2.6"/><polygon points="615.8000000000001,1053.7 625.2,1053.7 616.0,1062.7" fill="#b2b3b4"/><circle cx="613.6" cy="1065.7" r="4.7" fill="#499c54"/><circle cx="744" cy="404.8" r="4" fill="#8a9aa6"/><path d="M736,414.59999999999997 v-0.6 c0,-2.4 3.8,-3.4 8,-3.4 s8,1 8,3.4 v0.6 z" fill="#8a9aa6"/><circle cx="872" cy="669.1" r="4" fill="#8a9aa6"/><path d="M864,678.9 v-0.6 c0,-2.4 3.8,-3.4 8,-3.4 s8,1 8,3.4 v0.6 z" fill="#8a9aa6"/><circle cx="853.6" cy="1461.1" r="4" fill="#8a9aa6"/><path d="M845.6,1470.9 v-0.6 c0,-2.4 3.8,-3.4 8,-3.4 s8,1 8,3.4 v0.6 z" fill="#8a9aa6"/><g fill="none" stroke="#afb1b3" stroke-width="3.6"><path d="M69.9,1729 V1745"/><path d="M80.4,1733 V1735.2 C80.4,1741.4 69.9,1737.8 69.9,1743.8"/></g><circle cx="69.9" cy="1728.8" r="3.5" fill="#afb1b3"/><circle cx="69.9" cy="1745.2" r="3.5" fill="#afb1b3"/><circle cx="80.4" cy="1732.2" r="3.5" fill="#afb1b3"/><polygon points="167.8,1726.8 184.1,1736.6 167.8,1746.4" fill="#afb1b3"/><polygon points="293,1725 305.3,1731.6 293,1738.2 280.7,1731.6" fill="#afb1b3"/><polyline points="281.6,1737.2 293,1743.2 304.4,1737.2" fill="none" stroke="#afb1b3" stroke-width="2.4"/><polyline points="281.6,1742.4 293,1748.4 304.4,1742.4" fill="none" stroke="#afb1b3" stroke-width="2.4"/><rect x="535.7" y="1728" width="4" height="3.6" fill="#afb1b3"/><rect x="542.2" y="1728" width="14" height="3.6" fill="#afb1b3"/><rect x="535.7" y="1734.5" width="4" height="3.6" fill="#afb1b3"/><rect x="542.2" y="1734.5" width="14" height="3.6" fill="#afb1b3"/><rect x="535.7" y="1741" width="4" height="3.6" fill="#afb1b3"/><rect x="542.2" y="1741" width="14" height="3.6" fill="#afb1b3"/><circle cx="681.1" cy="1735.7" r="10.4" fill="#afb1b3"/><rect x="679.4" y="1729.4" width="3.4" height="7.6" fill="#3c3f41"/><rect x="679.4" y="1739" width="3.4" height="3.4" fill="#3c3f41"/><rect x="841.9" y="1726" width="22.3" height="20.2" fill="#afb1b3"/><polyline points="846,1730.6 851.4,1735.2 846,1739.8" fill="none" stroke="#3c3f41" stroke-width="2.2"/><rect x="852.6" y="1740" width="7.4" height="2.2" fill="#3c3f41"/><rect x="1007.8" y="1724.1" width="24.1" height="23.4" rx="3" fill="#6e6e6e"/><path d="M1017,1729.4 h-4 v12.8 h4 M1022.8,1729.4 h4 v12.8 h-4" fill="none" stroke="#3c3f41" stroke-width="2.2"/><polygon points="1229.9,1736.6 1236.4,1725.7 1249.5,1725.7 1256,1736.6 1249.5,1747.5 1236.4,1747.5" fill="#afb1b3"/><polygon points="1239,1730.2 1249.6,1736.6 1239,1743" fill="#3c3f41"/><path d="M1390.1,1734.6 L1399.6,1725.3 L1405.8,1725.3 L1405.0,1727.2 L1400.9,1730.5 L1393.6,1738.2 Z" fill="#afb1b3"/><path d="M1400.4,1730.0 L1416.0,1745.0 L1412.1,1749.2 L1397.2,1733.9 Z" fill="#afb1b3"/><rect x="17.6" y="1769" width="17.6" height="16.4" fill="none" stroke="#afb1b3" stroke-width="2"/><path d="M12.6,1773.6 V1790.5 H30.4" fill="none" stroke="#afb1b3" stroke-width="2"/><g fill="none" stroke="#afb1b3" stroke-width="3.4"><path d="M2736,1770 V1790"/><path d="M2747,1773 V1776.6 C2747,1783.6 2736,1780 2736,1787"/></g><circle cx="2736" cy="1769.8" r="3.7" fill="#afb1b3"/><circle cx="2736" cy="1790.2" r="3.7" fill="#afb1b3"/><circle cx="2747" cy="1772.6" r="3.7" fill="#afb1b3"/><rect x="2836" y="1778.4" width="16.8" height="11.8" fill="#afb1b3"/><path d="M2831,1778 v-3.4 a4.6,4.6 0 0 1 9.2,0 v4" fill="none" stroke="#afb1b3" stroke-width="2.4"/></svg>
</div><script>(function(){var d=window.devicePixelRatio||1,s=window.innerWidth/2880;if(d>1.01&&Math.abs(window.innerWidth*d-2880)<3){var w=document.getElementById("w");w.style.transformOrigin="0 0";w.style.transform="scale("+s+")";}})();</script></body></html>
